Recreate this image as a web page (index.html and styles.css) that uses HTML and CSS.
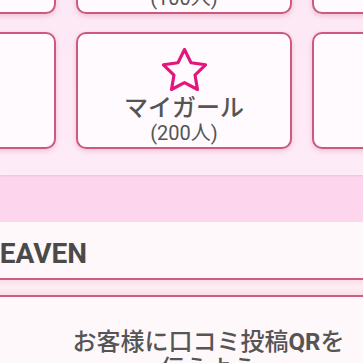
FILE: index.html
```html
<!DOCTYPE html>
<html lang="ja">
<head>
<meta charset="utf-8">
<link rel="stylesheet" href="styles.css">
</head>
<body>
<div class="page">
  <section class="menu">
    <div class="grid">
      <div class="card"><div class="label">写メ日記</div><div class="sub">(30件)</div></div>
      <div class="card"><div class="label">お気に入り</div><div class="sub">(100人)</div></div>
      <div class="card"><div class="label">小冊子を見る</div><div class="sub">(5件)</div></div>
      <div class="card"><div class="label">足あと</div><div class="sub">(10人)</div></div>
      <div class="card">
        <svg class="star" viewBox="1.3 1.3 21.4 20.4" width="45" height="43"><path d="M12 2l3.09 6.26L22 9.27l-5 4.87 1.18 6.88L12 17.77l-6.18 3.25L7 14.14 2 9.27l6.91-1.01L12 2z"/></svg>
        <div class="label">マイガール</div>
        <div class="sub">(200人)</div>
      </div>
      <div class="card"><div class="label">設定</div><div class="sub">(0件)</div></div>
    </div>
  </section>
  <div class="band"></div>
  <section class="info">
    <h2 class="title">HEAVEN</h2>
    <div class="divider"></div>
    <p class="msg">お客様に口コミ投稿<span class="qr">QR</span>を<br>伝えよう</p>
  </section>
</div>
</body>
</html>
```
FILE: styles.css
```css
html, body {
  margin: 0;
  padding: 0;
}
body {
  width: 363px;
  height: 363px;
  overflow: hidden;
  font-family: Roboto, "Noto Sans CJK JP", sans-serif;
  color: #555;
  background: #fff9fc;
}
.page {
  display: flex;
  flex-direction: column;
}
.menu {
  background: linear-gradient(#fde9f6, #fdebf7);
  height: 175px;
  overflow: visible;
  position: relative;
  box-shadow: 0 1px 2px rgba(180, 90, 140, 0.2);
}
.grid {
  display: grid;
  grid-template-columns: repeat(3, 216px);
  grid-auto-rows: 117px;
  column-gap: 20px;
  row-gap: 18px;
  margin-left: -160px;
  margin-top: -103px;
}
.card {
  box-sizing: border-box;
  background: #fffafd;
  border: 2px solid #cc5a7e;
  border-radius: 10px;
  box-shadow: 0 2px 5px rgba(200, 70, 120, 0.25);
  display: flex;
  flex-direction: column;
  align-items: center;
  justify-content: flex-end;
  padding-bottom: 3px;
  text-align: center;
}
.star {
  fill: none;
  stroke: #e3167b;
  stroke-width: 1.5;
  stroke-linejoin: round;
  margin-bottom: 3px;
}
.label {
  font-size: 24px;
  line-height: 28px;
  font-weight: 500;
  color: #555;
  white-space: nowrap;
}
.sub {
  font-size: 20px;
  line-height: 22px;
  font-weight: 400;
  color: #555;
  white-space: nowrap;
}
.band {
  height: 47px;
  background: #fdd6ee;
}
.info {
  background: #fff8fb;
  display: flex;
  flex-direction: column;
}
.title {
  margin: 16px 0 0 -20px;
  font-size: 28px;
  line-height: 32px;
  font-weight: 700;
  color: #4a4a4a;
}
.divider {
  margin-top: 8px;
  height: 15px;
  border-top: 2px solid #c9607f;
  border-bottom: 2px solid #c9607f;
  background: linear-gradient(#fcdcea, #fdeef5 50%, #fcdcea);
}
.msg {
  margin: 32px 0 0 0;
  padding-left: 54px;
  font-size: 24px;
  line-height: 27px;
  font-weight: 500;
  color: #555;
  text-align: center;
  width: 309px;
}
.qr {
  font-weight: 700;
}
```
